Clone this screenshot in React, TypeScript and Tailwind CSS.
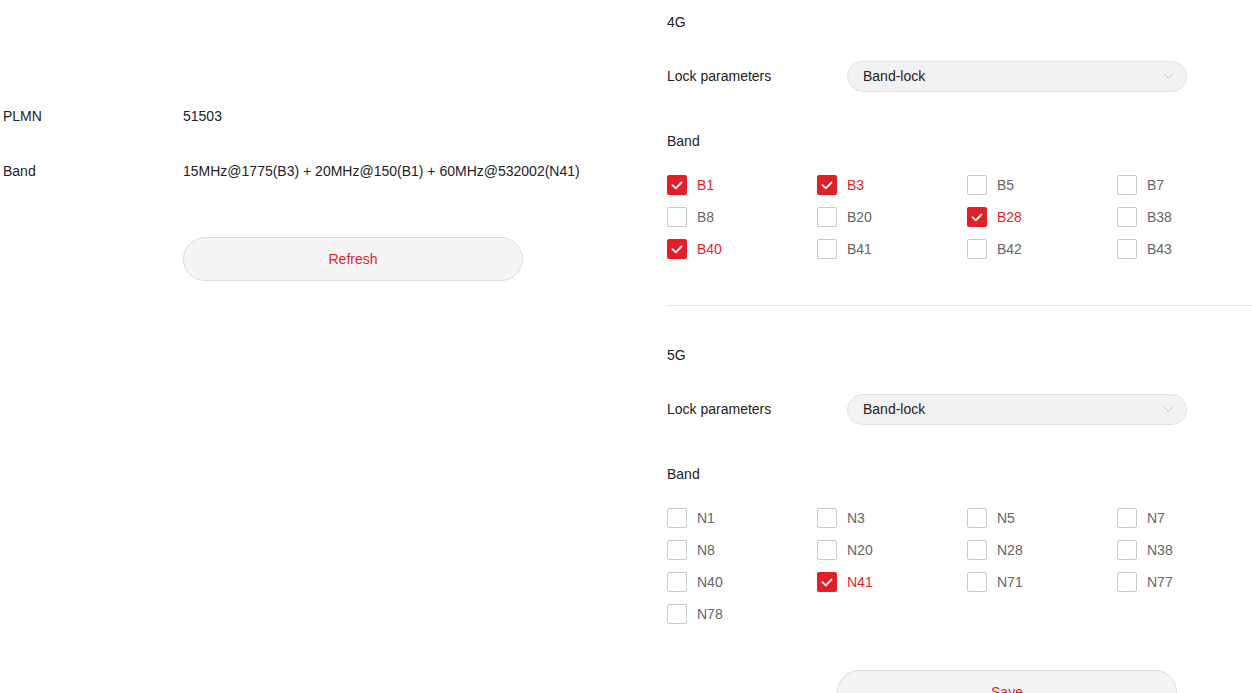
import { useState } from 'react';

type Band = { name: string; checked: boolean };

const lte: Band[] = [
  { name: 'B1', checked: true },
  { name: 'B3', checked: true },
  { name: 'B5', checked: false },
  { name: 'B7', checked: false },
  { name: 'B8', checked: false },
  { name: 'B20', checked: false },
  { name: 'B28', checked: true },
  { name: 'B38', checked: false },
  { name: 'B40', checked: true },
  { name: 'B41', checked: false },
  { name: 'B42', checked: false },
  { name: 'B43', checked: false },
];

const nr: Band[] = [
  { name: 'N1', checked: false },
  { name: 'N3', checked: false },
  { name: 'N5', checked: false },
  { name: 'N7', checked: false },
  { name: 'N8', checked: false },
  { name: 'N20', checked: false },
  { name: 'N28', checked: false },
  { name: 'N38', checked: false },
  { name: 'N40', checked: false },
  { name: 'N41', checked: true },
  { name: 'N71', checked: false },
  { name: 'N77', checked: false },
  { name: 'N78', checked: false },
];

function Checkbox({ band, onToggle }: { band: Band; onToggle: () => void }) {
  return (
    <label className="flex h-[32px] cursor-pointer items-center gap-[10px]" onClick={onToggle}>
      {band.checked ? (
        <span className="flex h-[20px] w-[20px] items-center justify-center rounded-[2px] bg-[#e31e26]">
          <svg width="12" height="9" viewBox="0 0 12 9" fill="none">
            <path d="M1.5 4.2 L4.8 7.3 L10.5 1.5" stroke="#fff" strokeWidth="1.8" strokeLinecap="round" strokeLinejoin="round" />
          </svg>
        </span>
      ) : (
        <span className="h-[20px] w-[20px] rounded-[2px] border border-[#c8c8c8] bg-white" />
      )}
      <span className={band.checked ? 'text-[#e31e26]' : 'text-[#666]'}>{band.name}</span>
    </label>
  );
}

function BandGrid({ initial }: { initial: Band[] }) {
  const [bands, setBands] = useState(initial);
  const toggle = (i: number) =>
    setBands(bands.map((b, idx) => (idx === i ? { ...b, checked: !b.checked } : b)));

  return (
    <div className="mt-[18px] grid grid-cols-[150px_150px_150px_150px]">
      {bands.map((b, i) => (
        <Checkbox key={b.name} band={b} onToggle={() => toggle(i)} />
      ))}
    </div>
  );
}

function LockSelect() {
  return (
    <div className="mt-[28px] flex h-[32px] items-center">
      <span className="w-[180px] text-[#222]">Lock parameters</span>
      <div className="flex h-[31px] w-[340px] items-center justify-between rounded-full border border-[#e2e2e2] bg-[#f2f2f2] pl-[15px] pr-[12px]">
        <span className="text-[#222]">Band-lock</span>
        <svg width="11" height="7" viewBox="0 0 11 7" fill="none">
          <path d="M1 1 L5.5 5.5 L10 1" stroke="#c4c4c4" strokeWidth="1" />
        </svg>
      </div>
    </div>
  );
}

function Section({ title, bands }: { title: string; bands: Band[] }) {
  return (
    <div>
      <div className="h-[20px] leading-[20px] text-[#222]">{title}</div>
      <LockSelect />
      <div className="mt-[39px] h-[20px] leading-[20px] text-[#222]">Band</div>
      <BandGrid initial={bands} />
    </div>
  );
}

export default function App() {
  return (
    <div className="flex bg-white font-['Liberation_Sans',Arial,sans-serif] text-[14px]">
      {/* carrier info */}
      <div className="w-[667px] shrink-0 pl-[3px]">
        <div className="mt-[106px] flex h-[20px] items-center">
          <span className="w-[180px] text-[#222]">PLMN</span>
          <span className="text-[#222]">51503</span>
        </div>
        <div className="mt-[35px] flex h-[20px] items-center">
          <span className="w-[180px] text-[#222]">Band</span>
          <span className="text-[#222]">15MHz@1775(B3) + 20MHz@150(B1) + 60MHz@532002(N41)</span>
        </div>
        <button className="ml-[180px] mt-[56px] h-[44px] w-[340px] rounded-full border border-[#dcdcdc] bg-[#f5f5f5] text-[#e31e26]">
          Refresh
        </button>
      </div>

      {/* band lock settings */}
      <div className="flex-1 pt-[12px]">
        <Section title="4G" bands={lte} />
        <div className="mt-[40px] border-t border-[#e6e6e6]" />
        <div className="pt-[39px]">
          <Section title="5G" bands={nr} />
        </div>
        <button className="ml-[170px] mt-[40px] mb-[30px] h-[44px] w-[340px] rounded-full border border-[#dcdcdc] bg-[#f5f5f5] text-[#e31e26]">
          Save
        </button>
      </div>
    </div>
  );
}
